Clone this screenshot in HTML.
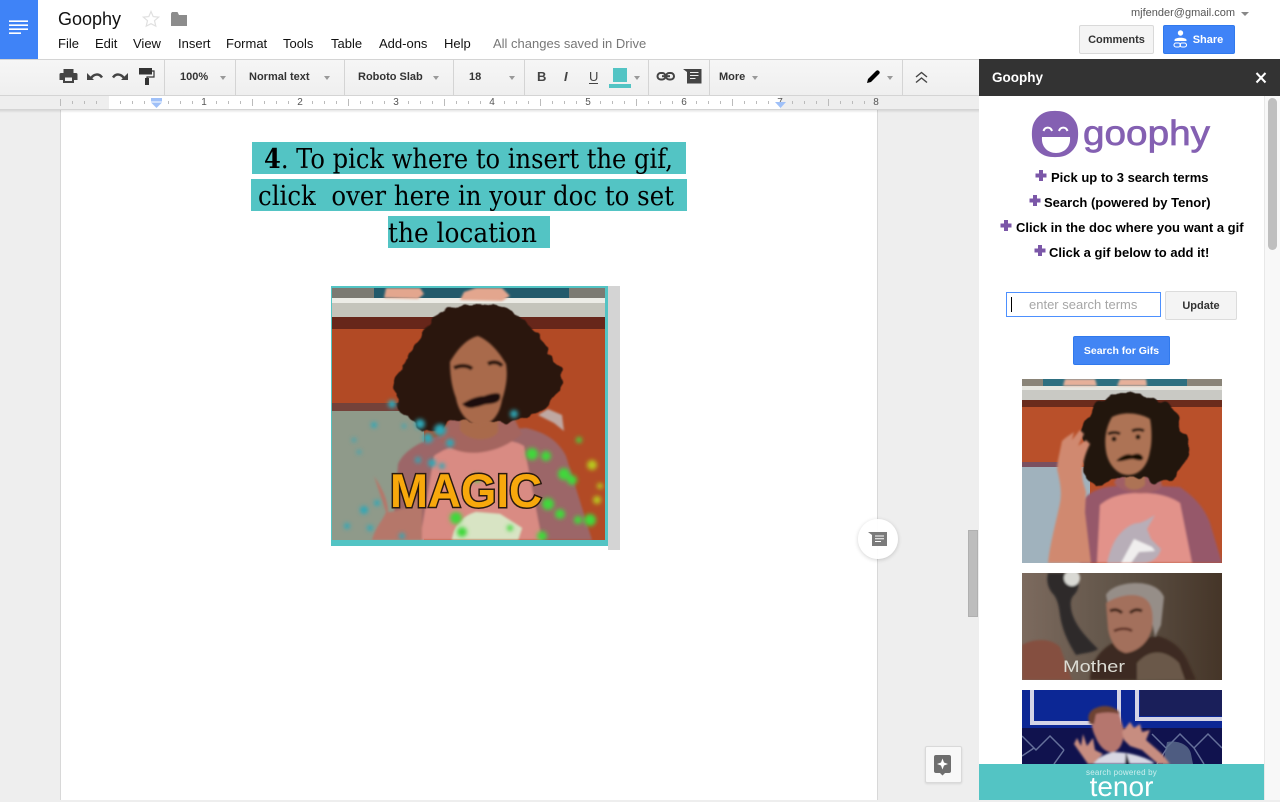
<!DOCTYPE html>
<html><head><meta charset="utf-8"><title>Goophy</title>
<style>
html,body{margin:0;padding:0;width:1280px;height:800px;overflow:hidden;background:#eee;font-family:"Liberation Sans",Arial,sans-serif;color:#000}
.a{position:absolute;white-space:nowrap}
svg{position:absolute;overflow:hidden}
.m{position:absolute;top:36px;font-size:13px;line-height:15px;color:#111;white-space:nowrap}
.d{position:absolute;top:60px;width:1px;height:35px;background:#d4d4d4}
.t{position:absolute;top:70px;font-size:11px;font-weight:bold;line-height:14px;color:#333;white-space:nowrap}
.ar{position:absolute;top:76px;width:0;height:0;border-left:3.5px solid transparent;border-right:3.5px solid transparent;border-top:4px solid #999}
.n{position:absolute;top:97px;font-size:10px;line-height:12px;color:#555;width:12px;text-align:center}
.btn{position:absolute;box-sizing:border-box;border-radius:2px;text-align:center;font-weight:bold;font-size:11px}
</style></head><body>

<!-- top header -->
<div class="a" style="left:0;top:0;width:1280px;height:59px;background:#fff"></div>
<div class="a" style="left:0;top:0;width:38px;height:59px;background:#3f83f7"></div>
<svg style="left:9px;top:20px" width="20" height="16"><path d="M0 1.200h19M0 5.200h19M0 9.200h19M0 13.200h12" stroke="#fff" stroke-width="1.600"/></svg>
<div class="a" style="left:58px;top:9px;font-size:18px;line-height:21px;color:#111">Goophy</div>
<svg style="left:142px;top:10px" width="18" height="18"><path d="M9 1.500l2.200 5.100 5.500.5-4.200 3.600 1.300 5.400L9 13.700l-4.800 2.400 1.300-5.400-4.200-3.600 5.500-.5z" fill="none" stroke="#e0e0e0" stroke-width="1.200"/></svg>
<svg style="left:171px;top:12px" width="17" height="14"><path d="M0 1.500V14h16V3H8L6.500 0H1z" fill="#8c8c8c"/></svg>
<div class="m" style="left:58px">File</div><div class="m" style="left:95px">Edit</div><div class="m" style="left:133px">View</div><div class="m" style="left:178px">Insert</div><div class="m" style="left:226px">Format</div><div class="m" style="left:283px">Tools</div><div class="m" style="left:331px">Table</div><div class="m" style="left:379px">Add-ons</div><div class="m" style="left:444px">Help</div>
<div class="m" style="left:493px;color:#777">All changes saved in Drive</div>
<div class="a" style="left:1131px;top:7px;font-size:11px;line-height:13px;color:#555">mjfender@gmail.com</div>
<div class="a" style="left:1241px;top:12px;width:0;height:0;border-left:4px solid transparent;border-right:4px solid transparent;border-top:4px solid #888"></div>
<div class="btn" style="left:1079px;top:25px;width:75px;height:29px;border:1px solid #d9d9d9;background:#f4f4f4;color:#333;line-height:28px">Comments</div>
<div class="btn" style="left:1163px;top:25px;width:72px;height:29px;border:1px solid #3079ed;background:#3f83f7;color:#fff;line-height:28px;padding-left:18px">Share</div>
<svg style="left:1173px;top:29px" width="16" height="20"><circle cx="7.500" cy="4" r="2.700" fill="#fff"/><path d="M1.500 11c0-3 12-3 12 0v1h-12z" fill="#fff"/><rect x="1" y="14" width="6.500" height="4" rx="2" fill="none" stroke="#fff" stroke-width="1.100"/><rect x="7" y="14" width="6.500" height="4" rx="2" fill="none" stroke="#fff" stroke-width="1.100"/></svg>

<!-- toolbar -->
<div class="a" style="left:0;top:59px;width:979px;height:37px;box-sizing:border-box;border-top:1px solid #d4d4d4;border-bottom:1px solid #d4d4d4;background:linear-gradient(#f6f6f6,#efefef)"></div>
<div class="d" style="left:164px"></div><div class="d" style="left:235px"></div><div class="d" style="left:344px"></div><div class="d" style="left:453px"></div><div class="d" style="left:524px"></div><div class="d" style="left:648px"></div><div class="d" style="left:709px"></div><div class="d" style="left:902px"></div>
<svg style="left:55px;top:62px" width="105" height="28">
<path d="M9 7h10v4h2.500a1.500 1.500 0 0 1 1.500 1.500V18h-3.500v3h-11v-3H5v-5.500A1.500 1.500 0 0 1 6.500 11H9z" fill="#444" transform="translate(-.5 0)"/><rect x="10" y="15.500" width="7" height="3.500" fill="#efefef"/>
<path d="M36 16c3-4 8-5 11-.5" fill="none" stroke="#444" stroke-width="2.500"/><path d="M32 11v7h7z" fill="#444"/>
<path d="M69 16c-3-4-8-5-11-.5" fill="none" stroke="#444" stroke-width="2.500"/><path d="M73 11v7h-7z" fill="#444"/>
<rect x="84" y="6" width="13" height="6.500" fill="#333"/><path d="M97 9h2v6h-7v2.500" fill="none" stroke="#333" stroke-width="1.200"/><rect x="90" y="16" width="4" height="7" fill="#333"/>
</svg>
<div class="t" style="left:180px">100%</div><div class="ar" style="left:220px"></div>
<div class="t" style="left:249px">Normal text</div><div class="ar" style="left:324px"></div>
<div class="t" style="left:358px">Roboto Slab</div><div class="ar" style="left:433px"></div>
<div class="t" style="left:469px">18</div><div class="ar" style="left:509px"></div>
<div class="a" style="left:537px;top:69px;font-size:13px;line-height:16px;font-weight:bold;color:#444">B</div>
<div class="a" style="left:564px;top:69px;font-size:13px;line-height:16px;font-weight:bold;font-style:italic;color:#444">I</div>
<div class="a" style="left:589px;top:70px;font-size:13px;line-height:13px;color:#444;border-bottom:1px solid #444">U</div>
<div class="a" style="left:613px;top:68px;width:14px;height:14px;background:#53c4c4"></div>
<div class="a" style="left:609px;top:84px;width:22px;height:4px;background:#53c4c4"></div>
<div class="ar" style="left:634px"></div>
<svg style="left:656px;top:71px" width="20" height="11"><rect x="1.500" y="2" width="8" height="6.500" rx="3.200" fill="none" stroke="#444" stroke-width="2"/><rect x="10" y="2" width="8" height="6.500" rx="3.200" fill="none" stroke="#444" stroke-width="2"/><path d="M6 5.200h8" stroke="#444" stroke-width="2"/></svg>
<svg style="left:683px;top:68px" width="19" height="16"><path d="M0 1h4v0h14.500v14.500H4V4z" fill="#444"/><path d="M7 4.500h8.500M7 7.500h8.500M7 10.500h5.500" stroke="#eee" stroke-width="1.100"/></svg>
<div class="t" style="left:719px">More</div><div class="ar" style="left:752px"></div>
<svg style="left:866px;top:69px" width="16" height="15"><path d="M1 14l1-4L10 2c1-1 2-1 3 0s1 2 0 3L5 13z" fill="#000"/></svg>
<div class="ar" style="left:887px"></div>
<svg style="left:915px;top:71px" width="13" height="13"><path d="M1 6l5.500-4.500L12 6M1 11.500l5.500-4.500 5.500 4.500" fill="none" stroke="#444" stroke-width="1.400"/></svg>

<!-- ruler -->
<div class="a" style="left:0;top:96px;width:979px;height:14px;background:#eee;border-bottom:1px solid #d4d4d4;box-sizing:border-box"></div>
<div class="a" style="left:109px;top:96px;width:671px;height:13px;background:#fff"></div>
<svg style="left:0;top:96px" width="979" height="14">
<path stroke="#bbb" stroke-width="1" d="M60.500 3v7M72.500 5v3M84.500 5v3M96.500 5v3M120.500 5v3M132.500 5v3M144.500 5v3M168.500 5v3M180.500 5v3M192.500 5v3M216.500 5v3M228.500 5v3M240.500 5v3M252.500 3v7M264.500 5v3M276.500 5v3M288.500 5v3M312.500 5v3M324.500 5v3M336.500 5v3M348.500 3v7M360.500 5v3M372.500 5v3M384.500 5v3M408.500 5v3M420.500 5v3M432.500 5v3M444.500 3v7M456.500 5v3M468.500 5v3M480.500 5v3M504.500 5v3M516.500 5v3M528.500 5v3M540.500 3v7M552.500 5v3M564.500 5v3M576.500 5v3M600.500 5v3M612.500 5v3M624.500 5v3M636.500 3v7M648.500 5v3M660.500 5v3M672.500 5v3M696.500 5v3M708.500 5v3M720.500 5v3M732.500 3v7M744.500 5v3M756.500 5v3M768.500 5v3M792.500 5v3M804.500 5v3M816.500 5v3M828.500 3v7M840.500 5v3M852.500 5v3M864.500 5v3"/>
</svg>
<div class="n" style="left:198px">1</div><div class="n" style="left:294px">2</div><div class="n" style="left:390px">3</div><div class="n" style="left:486px">4</div><div class="n" style="left:582px">5</div><div class="n" style="left:678px">6</div><div class="n" style="left:774px">7</div><div class="n" style="left:870px">8</div>
<svg style="left:150px;top:98px" width="13" height="11"><rect x="1" width="11" height="3.500" fill="#9fc0f8"/><path d="M1 4.500h11L6.500 10z" fill="#9fc0f8"/></svg>
<svg style="left:774px;top:102px" width="13" height="7"><path d="M1 0h11L6.500 6z" fill="#9fc0f8"/></svg>

<!-- document -->
<div class="a" style="left:60px;top:110px;width:818px;height:690px;background:#fff;box-sizing:border-box;border-left:1px solid #d8d8d8;border-right:1px solid #d8d8d8"></div>
<div class="a" style="left:0;top:110px;width:979px;height:3px;background:linear-gradient(rgba(0,0,0,.1),rgba(0,0,0,0))"></div>

<div class="a" style="left:252px;top:142px;width:434px;height:32px;background:#53c4c4"></div>
<div class="a" style="left:251px;top:179px;width:436px;height:32px;background:#53c4c4"></div>
<div class="a" style="left:388px;top:216px;width:162px;height:32px;background:#53c4c4"></div>
<svg style="left:240px;top:135px" width="460" height="120" font-family="'DejaVu Serif','Liberation Serif',serif" font-size="27" fill="#000">
<text x="24" y="33" textLength="409" lengthAdjust="spacingAndGlyphs"><tspan font-weight="bold">4</tspan>. To pick where to insert the gif,</text>
<text x="18" y="70" textLength="416" lengthAdjust="spacingAndGlyphs" xml:space="preserve">click  over here in your doc to set</text>
<text x="148" y="107" textLength="149" lengthAdjust="spacingAndGlyphs">the location</text>
</svg>

<!-- magic gif -->
<div class="a" style="left:608px;top:286px;width:12px;height:264px;background:#d4d4d4"></div>
<div class="a" style="left:331px;top:286px;width:277px;height:260px;background:#53c4c4"></div>
<svg style="left:332px;top:288px" width="273" height="252" viewBox="0 0 273 252">
<defs>
<filter id="b1" x="-10%" y="-10%" width="120%" height="120%"><feGaussianBlur stdDeviation="1"/></filter>
<filter id="b2" x="-20%" y="-20%" width="140%" height="140%"><feGaussianBlur stdDeviation="2.200"/></filter>
<filter id="curl" x="-15%" y="-15%" width="130%" height="130%"><feTurbulence type="fractalNoise" baseFrequency=".07" numOctaves="2" seed="4"/><feDisplacementMap in="SourceGraphic" scale="14" xChannelSelector="R" yChannelSelector="G"/><feGaussianBlur stdDeviation=".6"/></filter>
</defs>
<rect width="273" height="252" fill="#b24a25"/>
<rect width="273" height="10" fill="#7b7a72"/><rect x="42" width="195" height="10" fill="#235a6b"/>
<rect y="10" width="273" height="19" fill="#c4c4bb"/><rect y="10" width="273" height="5" fill="#ecece6"/>
<rect y="29" width="273" height="12" fill="#67261a"/>
<rect y="115" width="92" height="9" fill="#74423a"/>
<rect y="123" width="92" height="129" fill="#8f9a8a"/>
<g filter="url(#b1)">
<path d="M52 10l2-10h34l4 6-6 5zM128 12l4-8 12-4h26l8 8-8 5z" fill="#e3a68e"/>
<path d="M222 135l-16-8 10-6 14 6 2 16z" fill="#bfa8a2"/>
<path d="M60 252l6-76c6-14 24-24 48-30l80-6c18 4 32 12 40 28l26 84z" fill="#9c6668"/>
<path d="M88 252l14-84c14-10 36-16 56-16 12 0 24 0 34 6l18 94z" fill="#d98b83"/>
<path d="M108 152c16 18 54 18 82-6l-8-16h-64z" fill="#a4655f"/>
<path d="M128 118h38v26c-6 10-30 10-38-2z" fill="#a96a4c"/>
<path d="M42 188c8 12 14 24 14 36 8 0 14-4 20-4l14-16 0 48H40c4-14 10-18 14-28z" fill="#b5776a"/>
<path d="M120 252c2-14 10-24 24-28l24 2 22 14-4 12z" fill="#d8e4c4"/>
</g>
<path filter="url(#curl)" d="M140 16c-22-1-40 10-46 26-6 12-20 20-24 36-4 12-10 20-6 32 2 12 12 18 18 28 10 8 24 8 34-2l10-2h44c12 4 22 0 30-8 12-4 26-16 30-30 2-12-6-20-12-28-4-14-14-22-22-32-12-12-30-20-56-20z" fill="#2a1510"/>
<g filter="url(#b1)">
<path d="M146 48c-10 2-20 12-28 26 0 14 2 26 6 36 2 12 10 26 24 28 14-2 20-14 22-26 4-12 6-24 4-36-8-14-18-24-28-28z" fill="#a96a4c"/>
<path d="M122 80c6-3 14-3 18 1M156 76c5-3 11-2 14 2" fill="none" stroke="#2a1510" stroke-width="4"/>
<path d="M130 116c6-4 14-8 22-8 6-2 12-4 16-2 2 6-2 9-10 10-6 0-8 2-14 3-6 2-10 1-14-3z" fill="#1e0f0c"/>
</g>
<g filter="url(#b2)" fill="#2fa8b8">
<circle cx="60" cy="116" r="4"/><circle cx="42" cy="137" r="3"/><circle cx="72" cy="138" r="2"/><circle cx="22" cy="152" r="2"/><circle cx="27" cy="164" r="2"/><circle cx="88" cy="136" r="5"/><circle cx="108" cy="142" r="6"/><circle cx="96" cy="150" r="5"/><circle cx="118" cy="155" r="4"/><circle cx="100" cy="175" r="4"/><circle cx="86" cy="172" r="3"/><circle cx="110" cy="178" r="3"/><circle cx="182" cy="126" r="4"/><circle cx="15" cy="238" r="3"/><circle cx="38" cy="240" r="3"/><circle cx="32" cy="222" r="4"/><circle cx="70" cy="248" r="3"/><circle cx="45" cy="215" r="3"/>
</g>
<g filter="url(#b2)" fill="#3fd83a">
<circle cx="200" cy="166" r="6"/><circle cx="214" cy="168" r="5"/><circle cx="232" cy="186" r="6"/><circle cx="240" cy="192" r="5"/><circle cx="216" cy="216" r="6"/><circle cx="228" cy="226" r="5"/><circle cx="246" cy="232" r="4"/><circle cx="258" cy="232" r="6"/><circle cx="210" cy="248" r="5"/><circle cx="124" cy="230" r="6"/><circle cx="130" cy="244" r="5"/><circle cx="178" cy="240" r="3"/><circle cx="145" cy="190" r="4"/><circle cx="247" cy="152" r="3"/>
</g>
<g filter="url(#b2)" fill="#b8c81e"><circle cx="260" cy="177" r="5"/><circle cx="268" cy="198" r="3"/><circle cx="265" cy="212" r="4"/></g>
<text x="58" y="219" font-family="'Liberation Sans',sans-serif" font-weight="bold" font-size="47" textLength="152" lengthAdjust="spacingAndGlyphs" fill="#f7a80c" stroke="#2a1a10" stroke-width="3" paint-order="stroke">MAGIC</text>
</svg>

<!-- comment bubble -->
<div class="a" style="left:858px;top:519px;width:40px;height:40px;border-radius:50%;background:rgba(255,255,255,.95);box-shadow:0 1px 4px rgba(0,0,0,.18)"></div>
<svg style="left:868px;top:532px" width="20" height="15"><path d="M0 0h5v0h14v14H4V3z" fill="#7b7b7b"/><path d="M7 4h9M7 6.800h9M7 9.500h6" stroke="#fff" stroke-width="1"/></svg>

<!-- doc scrollbar -->
<div class="a" style="left:968px;top:530px;width:10px;height:87px;background:#bdbdbd;box-sizing:border-box;border:1px solid #b0b0b0"></div>

<!-- explore -->
<div class="a" style="left:925px;top:746px;width:37px;height:37px;background:#f8f8f8;border:1px solid #d9d9d9;box-sizing:border-box;border-radius:2px;box-shadow:0 1px 2px rgba(0,0,0,.1)"></div>
<svg style="left:933px;top:754px" width="20" height="22"><path d="M1 3a2 2 0 0 1 2-2h13a2 2 0 0 1 2 2v14a2 2 0 0 1-2 2h-4l-2.500 2.500L7 19H3a2 2 0 0 1-2-2z" fill="#6e6e6e"/><path d="M9.500 4.500l1.500 4 4 1.500-4 1.500-1.500 4-1.500-4-4-1.500 4-1.500z" fill="#fff"/></svg>

<!-- sidebar -->
<div class="a" style="left:979px;top:96px;width:301px;height:704px;background:#fff"></div>
<div class="a" style="left:979px;top:59px;width:301px;height:37px;background:#333"></div>
<div class="a" style="left:992px;top:70px;font-size:13.500px;font-weight:bold;line-height:16px;color:#fff">Goophy</div>
<svg style="left:1255px;top:71px" width="12" height="13"><path d="M1.500 2l9 9.500M10.500 2l-9 9.500" stroke="#fff" stroke-width="2"/></svg>
<div class="a" style="left:1264px;top:96px;width:16px;height:704px;background:#f8f8f8;border-left:1px solid #e8e8e8;box-sizing:border-box"></div>
<div class="a" style="left:1268px;top:98px;width:9px;height:152px;background:#bfbfbf;border-radius:5px"></div>

<svg style="left:1030px;top:110px" width="190" height="50">
<path d="M16 2c5-1.500 13-1.500 18 0 6 2 11 7 13 13 1.500 5 1.500 13 0 18-2 6-7 11-13 13-5 1.500-13 1.500-18 0-6-2-11-7-13-13-1.500-5-1.500-13 0-18 2-6 7-11 13-13z" fill="#8460b2"/>
<path d="M12 27h28c1 10-6 16-14 16s-15-6-14-16z" fill="#fff"/>
<path d="M13.500 21c1.500-4.500 7-4.500 8.500 0M29 21c1.500-4.500 7-4.500 8.500 0" fill="none" stroke="#fff" stroke-width="2"/>
<text x="53" y="35" font-family="'Liberation Sans',sans-serif" font-size="35" fill="#8460b2" stroke="#8460b2" stroke-width=".7" textLength="127" lengthAdjust="spacingAndGlyphs">goophy</text>
</svg>

<svg style="left:1000px;top:168px" width="50" height="90">
<path d="M41 2v11M35.500 7.500h11" stroke="#7b57a8" stroke-width="4"/>
<path d="M35 27v11M29.500 32.500h11" stroke="#7b57a8" stroke-width="4"/>
<path d="M6 52v11M.5 57.500h11" stroke="#7b57a8" stroke-width="4"/>
<path d="M40 77v11M34.500 82.500h11" stroke="#7b57a8" stroke-width="4"/>
</svg>
<div class="a" style="left:1051px;top:170px;font-size:13px;font-weight:bold;line-height:15px">Pick up to 3 search terms</div>
<div class="a" style="left:1044px;top:195px;font-size:13px;font-weight:bold;line-height:15px">Search (powered by Tenor)</div>
<div class="a" style="left:1016px;top:220px;font-size:13px;font-weight:bold;line-height:15px">Click in the doc where you want a gif</div>
<div class="a" style="left:1049px;top:245px;font-size:13px;font-weight:bold;line-height:15px">Click a gif below to add it!</div>

<div class="a" style="left:1006px;top:292px;width:155px;height:25px;box-sizing:border-box;border:1px solid #4d90fe;background:#fff"></div>
<div class="a" style="left:1011px;top:297px;width:1px;height:15px;background:#000"></div>
<div class="a" style="left:1029px;top:297px;font-size:13px;line-height:15px;color:#a6a6a6">enter search terms</div>
<div class="btn" style="left:1165px;top:291px;width:72px;height:29px;border:1px solid #dcdcdc;background:#f4f4f4;color:#333;line-height:28px">Update</div>
<div class="btn" style="left:1073px;top:336px;width:97px;height:29px;border:1px solid #3079ed;background:#4285f4;color:#fff;line-height:28px;font-size:10.500px">Search for Gifs</div>

<svg style="left:1022px;top:379px" width="200" height="184" viewBox="0 0 200 184">
<rect width="200" height="184" fill="#b9502a"/>
<rect width="200" height="7" fill="#8a8478"/><rect x="21" width="144" height="7" fill="#2e6f80"/>
<rect y="7" width="200" height="14" fill="#c9c9c4"/><rect y="7" width="200" height="4" fill="#e6e6e0"/>
<rect y="21" width="200" height="7" fill="#6a2b1c"/>
<rect y="83" width="42" height="6" fill="#7a5060"/>
<rect y="88" width="68" height="96" fill="#a0b2bd"/>
<g filter="url(#b1)">
<path d="M41 7l2-7h30l2 7zM95 7l3-7h26l1 7z" fill="#e6b09a"/>
<path d="M58 184l3-63c8-10 22-14 36-14h40l21 1c14 10 24 20 30 36l12 40z" fill="#96586a"/>
<path d="M75 184l3-58c12-10 26-12 40-12 14 0 28 2 40 10l12 60z" fill="#e2928a"/>
<path d="M92 104c10 12 36 14 48 4l-2-12H96z" fill="#a05f65"/>
<path d="M103 90h20v16c-6 6-16 6-20 0z" fill="#ad7355"/>
</g>
<path filter="url(#curl)" d="M105 14c-20-1-34 10-38 24-4 14-8 20-6 34 0 14 2 26 10 36 10 2 18-4 26-10h26c8 6 18 6 26 2 10-6 16-16 18-28-2-12-6-18-10-30-4-16-22-28-52-28z" fill="#22120e"/>
<g filter="url(#b1)">
<path d="M90 38c12-6 28-4 38 2 2 10 2 24 0 32-2 14-10 24-22 24-10 0-20-10-22-24-2-12 0-24 6-34z" fill="#ad7355"/>
<path d="M86 55c4-2 9-2 12 0M110 52c4-2 9-2 12 0" stroke="#22120e" stroke-width="3" fill="none"/>
<circle cx="92" cy="60" r="2.500" fill="#22120e"/><circle cx="116" cy="58" r="2.500" fill="#22120e"/>
<path d="M94 82c6-6 12-8 16-6 5-2 8-2 11 2 1 4-3 4-10 2-6 0-10 3-17 2z" fill="#120806"/>
<path d="M40 62c4-4 8-6 12-9l-2 8 8-10 4 4-6 12 8-6 4 4c-4 8-6 14-8 26 0 12 2 14 4 22l-1 20 6 51H26c2-20 8-40 12-60 2-12 0-20-2-30-2-6 0-12 4-32z" fill="#d0896f"/>
<path d="M85 184c4-16 8-26 18-34 4-3 8-6 14-6 6-2 8-3 16-8l-8 14 4 10 10 10c-2 8-8 14-20 14z" fill="#b8aeb8"/>
<path d="M112 160l18 8 3 4-16 1-8 11h-10z" fill="#f0eeee"/>
</g>
</svg>

<svg style="left:1022px;top:573px" width="200" height="107" viewBox="0 0 200 107">
<defs><linearGradient id="mg" x1="0" x2="1"><stop offset="0" stop-color="#7c6a5e"/><stop offset=".5" stop-color="#5f5347"/><stop offset="1" stop-color="#453528"/></linearGradient></defs>
<rect width="200" height="107" fill="url(#mg)"/>
<g filter="url(#b1)">
<path d="M0 72c10-6 28-8 38 2l12 33H0z" fill="#85503f"/>
<path d="M68 107c0-18 10-30 24-38l44-6c14 4 24 12 30 26l8 18z" fill="#3e2c20"/>
<path d="M115 90c12-14 28-14 42 0l6 17h-48z" fill="#6b594a"/>
<path d="M84 22c4-8 18-12 30-12 12 0 24 4 28 14l-3 28-6 12-4-20-8-16c-10-4-20-4-30 0l-3 14z" fill="#968e88"/>
<path d="M84 30c12-8 28-10 36-6 10 4 12 16 10 32-4 14-14 22-26 24-10-2-16-12-18-24z" fill="#a36f5c"/>
<path d="M88 38c4-2 8-2 12 2M108 40c4-4 8-4 12-2" stroke="#3a2018" stroke-width="3" fill="none"/>
<path d="M92 58c6-3 14-3 18 0" stroke="#5a2e24" stroke-width="2.500" fill="none"/>
<path d="M26 0h28c4 6 4 16-2 22-4 4-4 10-2 18 4 14 16 26 26 36-6 4-14 4-22 6-8-12-14-26-16-40-1-8-2-14-6-20-6-6-8-14-6-22z" fill="#2e2a2c"/>
<circle cx="50" cy="5" r="8" fill="#d9d9d4"/>
</g>
<text x="41" y="99" font-family="'Liberation Sans',sans-serif" font-size="17" fill="#dcdcd4" textLength="62" lengthAdjust="spacingAndGlyphs">Mother</text>
</svg>

<svg style="left:1022px;top:690px" width="200" height="74" viewBox="0 0 200 74">
<rect width="200" height="74" fill="#0c2795"/>
<rect y="38" width="200" height="36" fill="#10124e"/>
<rect x="118" y="0" width="82" height="26" fill="#1a1f5a"/>
<path d="M10 0v33h87V0M115 0v29h85" fill="none" stroke="#d4d4e6" stroke-width="4"/>
<g stroke="#7b88ae" stroke-width="1.500" fill="none" opacity=".8"><path d="M0 46l14 14 14-14 14 14M0 66l12-8M42 60l-10 14M130 44l14 14 14-14 14 14 14-14 14 14M145 58l-10 16M172 58l10 16"/></g>
<path d="M145 52c10-2 22 2 24 12l2 10h-30z" fill="#5e6f8e" opacity=".8"/>
<g filter="url(#b1)">
<path d="M71 74c4-6 12-10 20-12 10 0 26 2 40 10l1 2z" fill="#d8d8e4"/>
<path d="M96 20c-6-2-20-2-26 2-2 8 0 18 4 26 4 10 12 16 18 14 6-2 10-10 10-22z" fill="#b5766e"/>
<path d="M68 34c-4-8 0-14 6-16 8-4 20-2 24 6-8-2-16-2-24 0l-2 10z" fill="#6e4232"/>
<path d="M52 54l3-6 4 8 2-12 4 12 6-8 2 12 8 4-10 10H66zM100 42l8-10 4 6 6-4 2 8 8-2-4 10 16 14 8 10h-12l-16-14-12-4-6-6z" fill="#c78d80"/>
<path d="M104 62l4 12h-5z" fill="#223"/>
</g>
</svg>

<div class="a" style="left:979px;top:764px;width:285px;height:36px;background:#53c4c4"></div>
<div class="a" style="left:979px;top:768px;width:285px;text-align:center;font-size:8px;line-height:10px;color:#cdeeee;letter-spacing:.2px">search powered by</div>
<div class="a" style="left:979px;top:773px;width:285px;text-align:center;font-size:28px;line-height:28px;color:#fff">tenor</div>

</body></html>
